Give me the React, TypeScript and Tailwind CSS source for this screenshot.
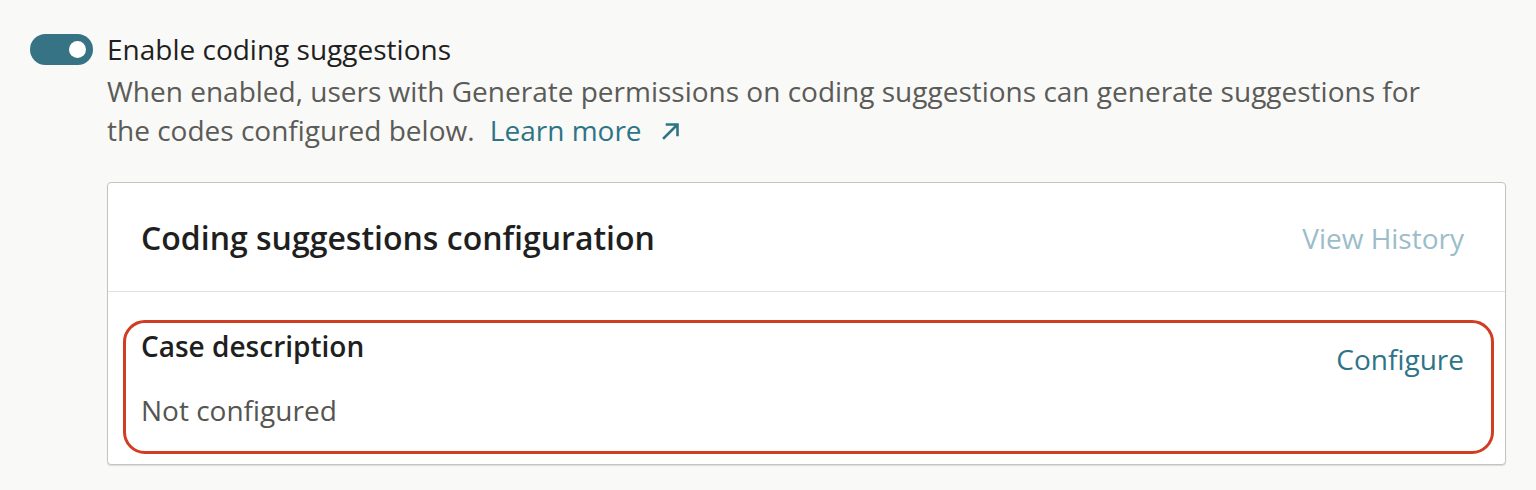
import React from 'react';

const ArrowUpRight: React.FC = () => (
  <svg width="22" height="22" viewBox="0 0 22 22" fill="none" className="inline-block ml-[18px] -mt-[6px] align-middle">
    <path d="M4 18L17 5M7 4.5h10.5V15" stroke="#2e7487" strokeWidth="2.6" strokeLinecap="square" />
  </svg>
);

const App: React.FC = () => {
  return (
    <div className="min-h-[490px] w-full bg-[#f9f9f7] font-['Open_Sans',sans-serif] px-[30px] pt-[34px]">
      <div className="flex gap-[14px]">
        {/* toggle */}
        <button
          type="button"
          aria-pressed="true"
          className="w-[63px] h-[31px] rounded-full bg-[#357385] flex items-center justify-end pr-[7px] flex-shrink-0"
        >
          <span className="block w-[17px] h-[17px] rounded-full bg-white" />
        </button>

        <div className="flex-1">
          <h2 className="text-[28px] leading-[32px] text-[#1f1f1f] -mt-[1px]">Enable coding suggestions</h2>
          <p className="mt-[7px] w-[1330px] text-[28px] leading-[39px] text-[#5b5b57]">
            When enabled, users with Generate permissions on coding suggestions can generate suggestions for the
            codes configured below.{' '}
            <a href="#" className="ml-[8px] text-[#2e7487]">
              Learn more
              <ArrowUpRight />
            </a>
          </p>

          <div className="mt-[32px] bg-white border border-[#c5c5c0] rounded-[4px] shadow-[0_1px_1px_rgba(0,0,0,0.12)]">
            <div className="h-[109px] flex items-center justify-between pl-[33px] pr-[41px] pt-[2px] border-b border-[#e2e2de]">
              <h3 className="text-[32px] font-semibold text-[#1f1f1f]">Coding suggestions configuration</h3>
              <button type="button" className="text-[28px] text-[#9bbdca]">View History</button>
            </div>
            <div className="pt-[28px] pb-[10px] pl-[15px] pr-[11px]">
              <div className="border-[3px] border-[#d13c23] rounded-[22px] pl-[15px] pr-[27px] pt-[4px] pb-[22px] flex justify-between">
                <div>
                  <div className="text-[28px] leading-[38px] font-semibold text-[#1f1f1f]">Case description</div>
                  <div className="mt-[26px] text-[28px] leading-[38px] text-[#555551]">Not configured</div>
                </div>
                <button type="button" className="self-start mt-[13px] text-[28px] leading-[38px] text-[#2e7487]">
                  Configure
                </button>
              </div>
            </div>
          </div>
        </div>
      </div>
    </div>
  );
};

export default App;
